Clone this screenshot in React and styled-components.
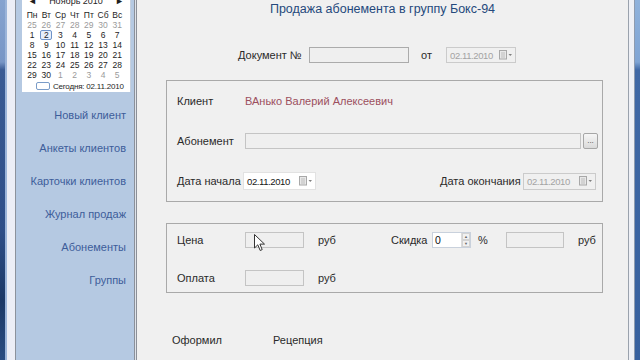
import React from "react";
import styled, { createGlobalStyle } from "styled-components";

const Global = createGlobalStyle`
  html, body { margin: 0; padding: 0; width: 640px; height: 360px; overflow: hidden; background: #f0f0f0; }
  body { font-family: "Liberation Sans", Arial, sans-serif; color: #222; }
  * { box-sizing: border-box; }
`;

const Window = styled.div`
  display: flex;
  width: 640px;
  height: 360px;
  overflow: hidden;
`;

const FrameLeft = styled.div`
  flex: none;
  width: 7px;
  border-right: 2px solid #9bb4d9;
  background: linear-gradient(to bottom, #86a3cf 0, #7896c6 62px, #3a5b94 70px, #2e4e88 230px, #1b3866 300px, #2a4d82 360px);
`;

const FrameRight = styled.div`
  flex: none;
  width: 12px;
  display: flex;
  border-left: 1px solid #9aa2ad;
`;

const FrameLight = styled.div`
  width: 6px;
  background: #eef0f6;
  border-right: 1px solid #8d9bb0;
`;

const FrameBlue = styled.div`
  flex: 1;
  background: linear-gradient(to bottom, #8fb2dc 0, #7fa4d4 62px, #3f68a6 70px, #36609f 360px);
`;

const InnerBorder = styled.div`
  flex: none;
  width: 9px;
  background: #eceef6;
  border-right: 1px solid #8c929c;
`;

const Sidebar = styled.div`
  flex: none;
  width: 118px;
  background: #b5c9e2;
  display: flex;
  flex-direction: column;
`;

const Divider = styled.div`
  flex: none;
  width: 3px;
  background: #dfe3ea;
  border-left: 1px solid #8b9099;
  border-right: 1px solid #8b9099;
`;

const Calendar = styled.div`
  margin: -6px 0 0 6px;
  width: 109px;
  height: 98px;
  background: #ffffff;
  border-right: 1px solid #c6d0de;
  padding-left: 3px;
  font-size: 8.5px;
  color: #1e1e1e;
`;

const CalHeader = styled.div`
  height: 14px;
  display: flex;
  align-items: center;
  justify-content: space-between;
  padding: 0 6px 0 3px;
  font-size: 9px;
`;

const DayGrid = styled.div`
  display: grid;
  grid-template-columns: repeat(7, 14.2px);
`;

const DayName = styled.div`
  height: 12px;
  line-height: 12px;
  padding-top: 1px;
  text-align: center;
`;

const Day = styled.div`
  height: 10px;
  line-height: 10px;
  text-align: center;
  color: ${(p) => (p.$other ? "#9a9a9a" : "#1e1e1e")};
  display: flex;
  justify-content: center;
`;

const Selected = styled.span`
  display: block;
  width: 12px;
  height: 10px;
  line-height: 8px;
  border: 1px solid #6f93c9;
  border-radius: 2px;
  background: #e6eefa;
`;

const TodayRow = styled.div`
  height: 12px;
  display: flex;
  align-items: center;
  padding-left: 11px;
  gap: 3px;
  font-size: 8px;
  letter-spacing: -0.2px;
  white-space: nowrap;
`;

const TodayBox = styled.span`
  flex: none;
  width: 14px;
  height: 8px;
  border: 1px solid #7a9cc8;
  border-radius: 2px;
`;

const Nav = styled.nav`
  display: flex;
  flex-direction: column;
  padding-top: 7px;
`;

const NavLink = styled.div`
  height: 33px;
  line-height: 33px;
  text-align: right;
  padding-right: 8px;
  font-size: 11px;
  color: #3d5d9a;
`;

const Main = styled.main`
  position: relative;
  flex: 1;
  background: #f0f0f0;
  display: flex;
  flex-direction: column;
  font-size: 11px;
`;

const Title = styled.h1`
  margin: 0;
  padding-top: 1px;
  height: 17px;
  line-height: 16px;
  text-align: center;
  font-size: 12.5px;
  font-weight: normal;
  color: #25497c;
`;

const Row = styled.div`
  display: flex;
  align-items: center;
  height: ${(p) => p.$h || 20}px;
  margin-top: ${(p) => p.$mt || 0}px;
  padding-left: ${(p) => p.$pl || 0}px;
`;

const Label = styled.span`
  flex: none;
  width: ${(p) => (p.$w ? `${p.$w}px` : "auto")};
  margin-left: ${(p) => p.$ml || 0}px;
  color: ${(p) => p.$color || "#2a2a2a"};
  white-space: nowrap;
`;

const TextBox = styled.div`
  flex: none;
  width: ${(p) => p.$w}px;
  height: 16px;
  margin-left: ${(p) => p.$ml || 0}px;
  background: #efefef;
  border: 1px solid ${(p) => (p.$dark ? "#ababab" : "#c4c4c4")};
`;

const GroupBox = styled.section`
  margin: ${(p) => p.$mt}px 0 0 29px;
  width: 437px;
  border: 1px solid #a9a9a9;
  padding: ${(p) => p.$pt}px 6px ${(p) => p.$pb}px 10px;
  display: flex;
  flex-direction: column;
  gap: ${(p) => p.$gap}px;
`;

const DateBox = styled.div`
  flex: none;
  width: ${(p) => p.$w}px;
  height: ${(p) => p.$h || 17}px;
  margin-left: ${(p) => p.$ml || 0}px;
  display: flex;
  align-items: center;
  justify-content: space-between;
  padding: 0 2px 0 3px;
  background: ${(p) => (p.$disabled ? "#f0f0f0" : "#ffffff")};
  border: 1px solid ${(p) => (p.$disabled ? "#cbcbcb" : "#e2e2e2")};
  color: ${(p) => (p.$disabled ? "#a3a3a3" : "#161616")};
  font-size: 9.5px;
  letter-spacing: -0.4px;
  white-space: nowrap;
`;

const EllipsisButton = styled.div`
  flex: none;
  width: 15px;
  height: 16px;
  margin-left: 2px;
  border: 1px solid #a6a6a6;
  border-radius: 2px;
  background: linear-gradient(#f6f6f6, #dadada);
  font-size: 8px;
  line-height: 14px;
  text-align: center;
  color: #444;
`;

const Spacer = styled.div`
  flex: 1;
`;

const Spinner = styled.div`
  flex: none;
  width: 39px;
  height: 16px;
  display: flex;
  background: #fff;
  border: 1px solid #c9d1dc;
`;

const SpinValue = styled.span`
  flex: 1;
  padding-left: 2px;
  line-height: 14px;
  font-size: 10.5px;
  color: #111;
`;

const SpinButtons = styled.div`
  width: 9px;
  display: flex;
  flex-direction: column;
  border-left: 1px solid #dcdcdc;
`;

const SpinBtn = styled.div`
  flex: 1;
  background: #f1f1f1;
  border: 1px solid #d3d3d3;
  display: flex;
  align-items: center;
  justify-content: center;
  font-size: 4px;
  color: #666;
  line-height: 1;
`;

const Cursor = styled.svg`
  position: absolute;
  left: 117px;
  top: 234px;
`;

const CalIcon = () => (
  <svg width="14" height="10" viewBox="0 0 14 10">
    <rect x="0.5" y="0.5" width="7" height="8.5" fill="#e8e8e8" stroke="#a8a8a8" />
    <line x1="2" y1="3" x2="6" y2="3" stroke="#bdbdbd" />
    <line x1="2" y1="5" x2="6" y2="5" stroke="#bdbdbd" />
    <line x1="2" y1="7" x2="6" y2="7" stroke="#bdbdbd" />
    <path d="M9.5 4 L13 4 L11.25 6 Z" fill="#808080" />
  </svg>
);

const weeks = [
  [[25, 1], [26, 1], [27, 1], [28, 1], [29, 1], [30, 1], [31, 1]],
  [[1], [2, 0, 1], [3], [4], [5], [6], [7]],
  [[8], [9], [10], [11], [12], [13], [14]],
  [[15], [16], [17], [18], [19], [20], [21]],
  [[22], [23], [24], [25], [26], [27], [28]],
  [[29], [30], [1, 1], [2, 1], [3, 1], [4, 1], [5, 1]],
];

const dayNames = ["Пн", "Вт", "Ср", "Чт", "Пт", "Сб", "Вс"];
const links = ["Новый клиент", "Анкеты клиентов", "Карточки клиентов", "Журнал продаж", "Абонементы", "Группы"];

export default function App() {
  return (
    <>
      <Global />
      <Window>
        <FrameLeft />
        <InnerBorder />
        <Sidebar>
          <Calendar>
            <CalHeader>
              <span>◄</span>
              <span>Ноябрь 2010</span>
              <span>►</span>
            </CalHeader>
            <DayGrid>
              {dayNames.map((d) => (
                <DayName key={d}>{d}</DayName>
              ))}
              {weeks.flat().map(([n, other, sel], i) => (
                <Day key={i} $other={!!other}>
                  {sel ? <Selected>{n}</Selected> : n}
                </Day>
              ))}
            </DayGrid>
            <TodayRow>
              <TodayBox />
              <span>Сегодня: 02.11.2010</span>
            </TodayRow>
          </Calendar>
          <Nav>
            {links.map((l) => (
              <NavLink key={l}>{l}</NavLink>
            ))}
          </Nav>
        </Sidebar>
        <Divider />
        <Main>
          <Title>Продажа абонемента в группу Бокс-94</Title>
          <Row $h={16} $mt={30} $pl={101}>
            <Label $w={71}>Документ №</Label>
            <TextBox $w={100} $dark />
            <Label $w={25} $ml={12}>от</Label>
            <DateBox $w={70} $h={16} $disabled>
              <span>02.11.2010</span>
              <CalIcon />
            </DateBox>
          </Row>

          <GroupBox $mt={17} $pt={10} $pb={10} $gap={20}>
            <Row>
              <Label $w={68}>Клиент</Label>
              <Label $color="#9c4f5e">ВАнько Валерий Алексеевич</Label>
            </Row>
            <Row>
              <Label $w={68}>Абонемент</Label>
              <TextBox $w={336} />
              <EllipsisButton>...</EllipsisButton>
            </Row>
            <Row>
              <Label $w={66}>Дата начала</Label>
              <DateBox $w={73} $h={18}>
                <span>02.11.2010</span>
                <CalIcon />
              </DateBox>
              <Spacer />
              <Label $w={83}>Дата окончания</Label>
              <DateBox $w={73} $h={17} $disabled>
                <span>02.11.2010</span>
                <CalIcon />
              </DateBox>
            </Row>
          </GroupBox>

          <GroupBox $mt={21} $pt={6} $pb={4} $gap={18}>
            <Row>
              <Label $w={68}>Цена</Label>
              <TextBox $w={59} />
              <Label $w={73} $ml={14}>руб</Label>
              <Label $w={41}>Скидка</Label>
              <Spinner>
                <SpinValue>0</SpinValue>
                <SpinButtons>
                  <SpinBtn>▲</SpinBtn>
                  <SpinBtn>▼</SpinBtn>
                </SpinButtons>
              </Spinner>
              <Label $w={28} $ml={7}>%</Label>
              <TextBox $w={58} />
              <Label $ml={14}>руб</Label>
            </Row>
            <Row>
              <Label $w={68}>Оплата</Label>
              <TextBox $w={59} />
              <Label $ml={14}>руб</Label>
            </Row>
          </GroupBox>

          <Row $h={16} $mt={39} $pl={35}>
            <Label $w={101}>Оформил</Label>
            <Label>Рецепция</Label>
          </Row>

          <Cursor width="12" height="18" viewBox="0 0 12 18">
            <path d="M0.5 0.5 L0.5 14 L3.8 10.8 L6.2 16.5 L8.2 15.6 L5.9 10.1 L10.5 10.1 Z" fill="#fff" stroke="#333" strokeWidth="1" strokeLinejoin="round" />
          </Cursor>
        </Main>
        <FrameRight>
          <FrameLight />
          <FrameBlue />
        </FrameRight>
      </Window>
    </>
  );
}
